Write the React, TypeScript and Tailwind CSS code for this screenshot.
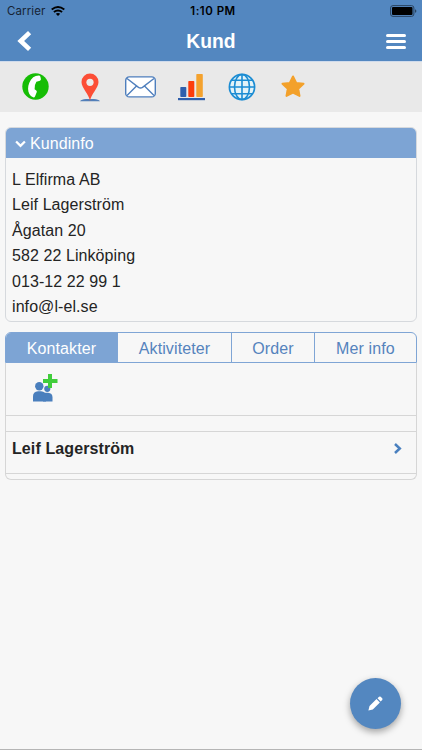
import type { ReactNode } from "react";

const customer = [
  "L Elfirma AB",
  "Leif Lagerström",
  "Ågatan 20",
  "582 22 Linköping",
  "013-12 22 99 1",
  "info@l-el.se",
];

const tabs = [
  { label: "Kontakter", width: "w-[112px]", active: true },
  { label: "Aktiviteter", width: "w-[114px]", active: false },
  { label: "Order", width: "w-[83px]", active: false },
  { label: "Mer info", width: "flex-1", active: false },
];

export default function App() {
  return (
    <div className="relative flex h-[750px] w-[422px] flex-col overflow-hidden border-b border-[#b5b5b5] bg-[#f7f7f7] font-['Liberation_Sans',Arial,sans-serif] text-base text-[#242424]">
      <header className="h-[62px] shrink-0 border-b border-[#cfdbec] bg-[#5387c0]">
        <StatusBar />
        <div className="flex h-[38px] items-center justify-between pl-[17px] pr-4 text-white">
          <svg className="h-[22px] w-[15px]" viewBox="0 0 15 22" fill="none" stroke="currentColor" strokeWidth="4.6">
            <path d="M12.6 2.6 3.7 11l8.9 8.4" />
          </svg>
          <h1 className="pl-[4px] pt-[2px] text-[19.3px] font-bold leading-none">Kund</h1>
          <div className="flex w-[20px] flex-col gap-[3px]">
            <span className="h-[3px] rounded-full bg-white" />
            <span className="h-[3px] rounded-full bg-white" />
            <span className="h-[3px] rounded-full bg-white" />
          </div>
        </div>
      </header>

      <Toolbar />

      {/* Customer details */}
      <section className="mx-[5px] mt-[15px] h-[195px] shrink-0 overflow-hidden rounded-md border border-[#d6d9dd]">
        <div className="flex h-[30px] items-center bg-[#7da4d4] pl-[9px] text-white">
          <svg className="mr-[4px] mt-[2px] h-[8px] w-[11px]" viewBox="0 0 11 8" fill="none" stroke="currentColor" strokeWidth="2.3">
            <path d="m1.1 1.5 4.4 4.3 4.4-4.3" />
          </svg>
          <h2 className="pt-[2px] tracking-[0.08px]">Kundinfo</h2>
        </div>
        <div className="pl-[6px] pt-[9px] leading-[25.4px] tracking-[0.08px]">
          {customer.map((line) => (
            <p key={line}>{line}</p>
          ))}
        </div>
      </section>

      {/* Contacts */}
      <section className="mx-[5px] mt-[10px] h-[148px] shrink-0">
        <div className="flex h-[31px] overflow-hidden rounded-t-md border border-[#7fa5d5]">
          {tabs.map((t) => (
            <Tab key={t.label} {...t} />
          ))}
        </div>
        <div className="flex h-[117px] flex-col rounded-b-md border border-t-0 border-[#d6d6d6]">
          <div className="h-[53px] border-b border-[#d6d6d6] pl-[27px] pt-[11px]">
            <AddContactIcon />
          </div>
          <div className="h-[16px] border-b border-[#d6d6d6]" />
          <div className="flex h-[42px] justify-between border-b border-[#d6d6d6] pl-[6px] pr-[14px] pt-[7px]">
            <span className="text-[16px] font-bold leading-[19px] tracking-[0.1px]">Leif Lagerström</span>
            <svg className="mt-[4px] h-[11px] w-[9px]" viewBox="0 0 9 11" fill="none" stroke="#4a80bf" strokeWidth="2.5">
              <path d="m2 1 4.8 4.5L2 10" />
            </svg>
          </div>
        </div>
      </section>

      <button
        aria-label="Redigera"
        className="absolute bottom-[20px] right-[21px] flex h-[51px] w-[51px] items-center justify-center rounded-full bg-[#5387c0] shadow-[0_3px_7px_rgba(0,0,0,0.35)]"
      >
        <svg className="h-[15px] w-[15px]" viewBox="0 0 15 15" fill="#fff">
          <path d="M.4 14.6 1.5 10.1 8.500 3.100l3.400 3.400-7.100 7zM9.500 2.300l1.600-1.500q.8-.7 1.600 0l1.500 1.500q.7.8 0 1.600l-1.600 1.500z" />
        </svg>
      </button>
    </div>
  );
}

function StatusBar() {
  return (
    <div className="grid h-[22px] grid-cols-3 items-center pl-[7px] pr-[5px] font-[Inter,sans-serif] text-black">
      <div className="flex items-center gap-[6px]">
        <span className="pt-[2px] text-[11.5px] tracking-[0.1px] text-[#162334]">Carrier</span>
        <svg className="h-[10px] w-[14px]" viewBox="0 0 14 10" fill="none" stroke="currentColor" strokeWidth="1.9">
          <path d="M.7 3.6q6.3-5 12.6 0M2.9 6q4.1-3.2 8.2 0" />
          <path d="M4.8 7.7q2.2-1.6 4.4 0L7 9.9z" fill="currentColor" stroke="none" />
        </svg>
      </div>
      <span className="pl-[2px] pt-[2px] text-center text-[11.5px] font-semibold tracking-[0.5px]">1:10 PM</span>
      <svg className="h-[12px] w-[27px] justify-self-end" viewBox="0 0 27 12">
        <rect x=".6" y=".6" width="23.3" height="10.8" rx="2.4" fill="none" stroke="#294461" />
        <rect x="2" y="2" width="20.5" height="8" rx="1" />
        <path d="M25 4.2q1.4.4 1.4 1.8T25 7.8z" fill="#294461" />
      </svg>
    </div>
  );
}

function Toolbar() {
  return (
    <nav className="flex h-[50px] shrink-0 items-center bg-[#e9e9e9] pl-[10px]">
      <Tool>
        <svg className="mb-px h-[27px] w-[27px]" viewBox="0 0 27 27">
          <circle cx="13.5" cy="13.5" r="13.2" fill="#16bd05" />
          <path
            d="M11.2 4.2Q13.5 2.6 16.8 2.6q1.300 0 1.600 1.200l.5 2.300q.2 1.300-1 1.700l-3.500 1q-2.100 3.200-1.800 7.400l1.700 1.200q.9.8.4 1.900l-1.700 4.200q-.6 1.300-1.900.8C4.600 22 4.200 10.300 11.200 4.200z"
            fill="#fff"
          />
        </svg>
      </Tool>
      <Tool>
        <svg className="ml-[5px] h-[29px] w-[20px] shrink-0" viewBox="0 0 20 29">
          <path d="M0 28.300q1.500-2 6-2.200h8q4.500.2 6 2.200z" fill="#527fb9" />
          <path d="M10 28C9 21 1.500 15 1.500 9a8.500 8.500 0 0 1 17 0C18.500 15 11 21 10 28z" fill="#fc4e36" />
          <circle cx="10" cy="9.300" r="3.600" fill="#ecebea" />
        </svg>
      </Tool>
      <Tool>
        <svg className="ml-[4px] h-[22px] w-[31px] shrink-0" viewBox="0 0 31 22" fill="none" stroke="#4f7fbd" strokeWidth="1.400">
          <rect x=".7" y=".9" width="29.600" height="20" rx="3.500" fill="#fff" />
          <path d="m2 2.500 11.500 8.900q2 1.300 4 0L29 2.500M2 19.500l9.500-9.500M29 19.500l-9.500-9.500" />
        </svg>
      </Tool>
      <Tool>
        <svg className="ml-[3px] h-[28px] w-[27px] shrink-0" viewBox="0 0 27 28">
          <rect x="2.300" y="14" width="6" height="10" rx=".7" fill="#2f5fac" />
          <rect x="10.300" y="8" width="6" height="16" rx=".7" fill="#fd3d0c" />
          <rect x="18.300" y="1" width="6.500" height="23" rx=".7" fill="#f4a22e" />
          <rect y="25" width="27" height="2.200" fill="#2f5fac" />
        </svg>
      </Tool>
      <Tool>
        <svg className="ml-[2px] h-[28px] w-[28px] shrink-0" viewBox="0 0 28 28" fill="none" stroke="#1b8cd3" strokeWidth="1.600">
          <circle cx="14" cy="14" r="12.600" fill="#e3f3f8" strokeWidth="1.700" />
          <ellipse cx="14" cy="14" rx="7.500" ry="12.500" />
          <path d="M14 1.400v25.200M1.400 14h25.200M3.500 7.300h21M3.500 20.700h21" />
        </svg>
      </Tool>
      <Tool>
        <svg className="h-[24px] w-[24px]" viewBox="0 0 24 24" fill="#f3a12b" stroke="#f3a12b" strokeWidth="2" strokeLinejoin="round">
          <path d="m12 1.500 3.200 6.400 7.300.9-5.300 5 1.300 7.100-6.500-3.400-6.500 3.400 1.300-7.100-5.300-5 7.300-.9z" />
        </svg>
      </Tool>
    </nav>
  );
}

function Tool({ children }: { children: ReactNode }) {
  return <div className="flex w-[51.400px] items-center justify-center">{children}</div>;
}

function Tab({ label, width, active }: { label: string; width: string; active: boolean }) {
  return (
    <div
      className={`flex items-center justify-center border-r border-[#7fa5d5] pt-[2px] tracking-[0.12px] last:border-r-0 ${width} ${
        active ? "bg-[#7da4d4] text-white" : "text-[#5583bd]"
      }`}
    >
      {label}
    </div>
  );
}

function AddContactIcon() {
  return (
    <svg className="h-[28px] w-[25px]" viewBox="0 0 25 28">
      <g fill="#4a7fbd">
        <circle cx="14.300" cy="14.800" r="3.100" />
        <path d="M10 27.500v-8.700h5q4.500.3 4.500 4.700v4z" />
        <circle cx="6.300" cy="12.200" r="4.200" />
        <path d="M0 27.500v-5q0-5 5-5.200h3q5 .2 5 5.200v5z" />
      </g>
      <path d="M15 0h4v5h5.500v4H19v5h-4V9h-5V5h5z" fill="#40cd3b" />
    </svg>
  );
}
